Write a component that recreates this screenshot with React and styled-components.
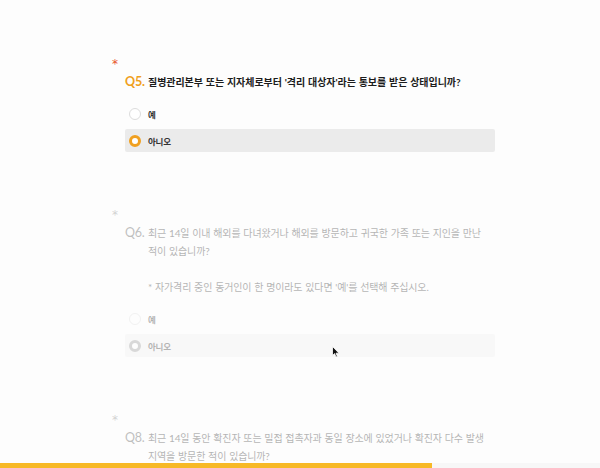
import React from "react";
import styled, { createGlobalStyle } from "styled-components";

const GlobalStyle = createGlobalStyle`
  html, body {
    margin: 0;
    padding: 0;
    background: #fdfdfd;
    overflow: hidden;
  }
  body {
    font-family: Lato, "Noto Sans CJK KR", sans-serif;
    color: #222;
  }
`;

const questions = [
  {
    id: "Q5.",
    lines: ["질병관리본부 또는 지자체로부터 '격리 대상자'라는 통보를 받은 상태입니까?"],
    active: true,
    selected: 1,
  },
  {
    id: "Q6.",
    lines: [
      "최근 14일 이내 해외를 다녀왔거나 해외를 방문하고 귀국한 가족 또는 지인을 만난 적이 있습니까?",
      "",
      "* 자가격리 중인 동거인이 한 명이라도 있다면 '예'를 선택해 주십시오.",
    ],
    active: false,
    selected: 1,
  },
  {
    id: "Q8.",
    lines: [
      "최근 14일 동안 확진자 또는 밀접 접촉자과 동일 장소에 있었거나 확진자 다수 발생 지역을 방문한 적이 있습니까?",
    ],
    active: false,
    selected: null,
  },
];

const Page = styled.div`
  padding: 57px 0 0 112px;
`;

const Question = styled.section`
  margin-bottom: 56px;
  opacity: ${(p) => (p.$active ? 1 : 0.36)};
`;

const Star = styled.div`
  height: 12px;
  line-height: 15px;
  font-size: 12px;
  font-family: "DejaVu Sans", sans-serif;
  color: ${(p) => (p.$active ? "#e8532a" : "#888")};
  margin-bottom: 4px;
`;

const Header = styled.div`
  display: flex;
  padding-left: 13px;
  width: 370px;
`;

const Label = styled.span`
  flex: 0 0 23px;
  font-family: Lato, sans-serif;
  font-size: 12.5px;
  font-weight: ${(p) => (p.$active ? 700 : 400)};
  line-height: 18px;
  color: ${(p) => (p.$active ? "#f0a020" : "#555")};
  letter-spacing: -0.2px;
`;

const Text = styled.div`
  flex: 1;
  font-size: 10px;
  line-height: 18px;
  letter-spacing: ${(p) => (p.$active ? "-0.05px" : "-0.15px")};
  word-spacing: 0.5px;
  word-break: keep-all;
  font-weight: ${(p) => (p.$active ? 700 : 400)};
  color: ${(p) => (p.$active ? "#1c1c1c" : "#333")};
`;

const Line = styled.div`
  min-height: 18px;
`;

const Options = styled.div`
  margin-top: 11px;
  margin-left: 13px;
  width: 370px;
  display: flex;
  flex-direction: column;
  gap: 4px;
`;

const Option = styled.div`
  display: flex;
  align-items: center;
  gap: 7px;
  height: 23px;
  padding-left: 4px;
  border-radius: 2px;
  background: ${(p) => (p.$on ? (p.$active ? "#ebebeb" : "#f0f0f0") : "transparent")};
`;

const Radio = styled.span`
  box-sizing: border-box;
  width: 12px;
  height: 12px;
  border-radius: 50%;
  background: #fff;
  border: ${(p) =>
    p.$on ? `3px solid ${p.$active ? "#f0a020" : "#999"}` : "1px solid #dcdcdc"};
`;

const OptionText = styled.span`
  font-size: 8.5px;
  font-weight: 700;
  letter-spacing: -0.2px;
  color: #333;
`;

const Progress = styled.div`
  position: fixed;
  left: 0;
  right: 0;
  bottom: 0;
  height: 5px;
  background: #f7f7f7;
`;

const ProgressFill = styled.div`
  height: 100%;
  background: #f7b926;
`;

const Cursor = styled.svg`
  position: fixed;
  left: 332px;
  top: 346px;
`;

function Q({ q }) {
  return (
    <Question $active={q.active}>
      <Star $active={q.active}>*</Star>
      <Header>
        <Label $active={q.active}>{q.id}</Label>
        <Text $active={q.active}>
          {q.lines.map((l, i) => (
            <Line key={i}>{l}</Line>
          ))}
        </Text>
      </Header>
      <Options>
        {["예", "아니오"].map((o, i) => (
          <Option key={o} $on={q.selected === i} $active={q.active}>
            <Radio $on={q.selected === i} $active={q.active} />
            <OptionText>{o}</OptionText>
          </Option>
        ))}
      </Options>
    </Question>
  );
}

export default function App() {
  return (
    <>
      <GlobalStyle />
      <Page>
        {questions.map((q) => (
          <Q key={q.id} q={q} />
        ))}
      </Page>
      <Progress>
        <ProgressFill style={{ width: `${(432 / 600) * 100}%` }} />
      </Progress>
      <Cursor width="8" height="12" viewBox="0 0 8 12">
        <path d="M0.5 0.5 L0.5 9.5 L2.6 7.6 L4 11 L5.4 10.4 L4 7.2 L7 7.2 Z" fill="#111" stroke="#fff" strokeWidth="0.8" />
      </Cursor>
    </>
  );
}
